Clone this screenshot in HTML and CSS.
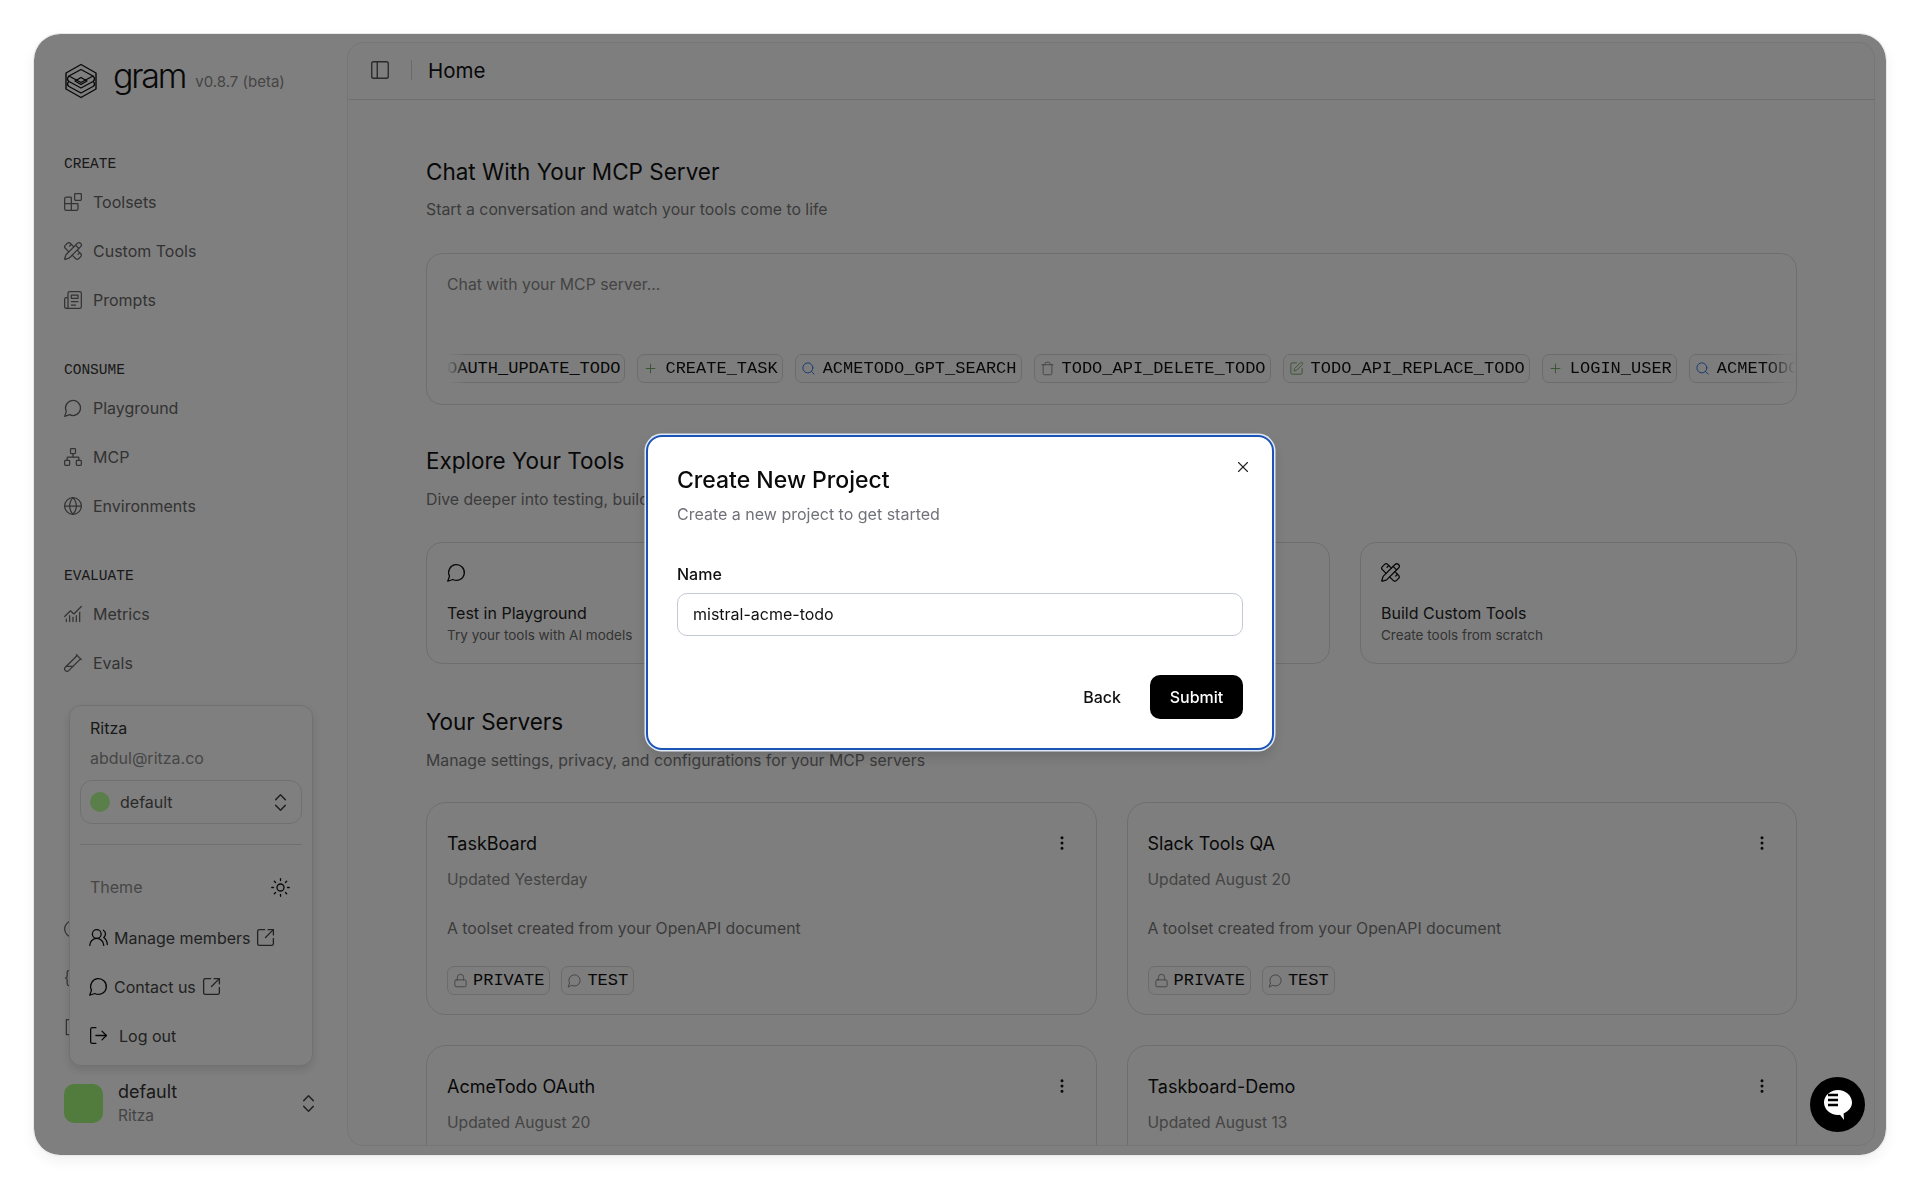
FILE: index.html
```html
<!DOCTYPE html>
<html lang="en">
<head>
    <meta charset="UTF-8">
    <title>Gram - Home</title>
    <link rel="stylesheet" href="styles.css">
</head>
<body>
    <svg class="sprite" xmlns="http://www.w3.org/2000/svg">
        <symbol id="i-blocks" viewBox="0 0 24 24"><path d="M10 22V7a1 1 0 0 0-1-1H4a2 2 0 0 0-2 2v12a2 2 0 0 0 2 2h12a2 2 0 0 0 2-2v-5a1 1 0 0 0-1-1H2"/><rect x="14" y="2" width="8" height="8" rx="1"/></symbol>
        <symbol id="i-ruler" viewBox="0 0 24 24"><path d="M13 7 8.7 2.7a2.41 2.41 0 0 0-3.4 0L2.7 5.3a2.41 2.41 0 0 0 0 3.4L7 13"/><path d="m8 6 2-2"/><path d="m18 16 2-2"/><path d="m17 11 4.3 4.3c.94.94.94 2.46 0 3.4l-2.6 2.6c-.94.94-2.46.94-3.4 0L11 17"/><path d="M21.174 6.812a1 1 0 0 0-3.986-3.987L3.842 16.174a2 2 0 0 0-.5.83l-1.321 4.352a.5.5 0 0 0 .623.622l4.353-1.32a2 2 0 0 0 .83-.497z"/><path d="m15 5 4 4"/></symbol>
        <symbol id="i-news" viewBox="0 0 24 24"><path d="M4 22h16a2 2 0 0 0 2-2V4a2 2 0 0 0-2-2H8a2 2 0 0 0-2 2v16a2 2 0 0 1-2 2Zm0 0a2 2 0 0 1-2-2v-9c0-1.1.9-2 2-2h2"/><path d="M18 14h-8"/><path d="M15 18h-5"/><path d="M10 6h8v4h-8V6Z"/></symbol>
        <symbol id="i-chat" viewBox="0 0 24 24"><path d="M7.9 20A9 9 0 1 0 4 16.1L2 22Z"/></symbol>
        <symbol id="i-network" viewBox="0 0 24 24"><rect x="16" y="16" width="6" height="6" rx="1"/><rect x="2" y="16" width="6" height="6" rx="1"/><rect x="9" y="2" width="6" height="6" rx="1"/><path d="M5 16v-3a1 1 0 0 1 1-1h12a1 1 0 0 1 1 1v3"/><path d="M12 12V8"/></symbol>
        <symbol id="i-globe" viewBox="0 0 24 24"><circle cx="12" cy="12" r="10"/><path d="M12 2a14.5 14.5 0 0 0 0 20 14.5 14.5 0 0 0 0-20"/><path d="M2 12h20"/></symbol>
        <symbol id="i-chart" viewBox="0 0 24 24"><path d="M12 16v5"/><path d="M16 14v7"/><path d="M20 10v11"/><path d="m22 3-8.646 8.646a.5.5 0 0 1-.708 0L9.354 8.354a.5.5 0 0 0-.707 0L2 15"/><path d="M4 18v3"/><path d="M8 14v7"/></symbol>
        <symbol id="i-tube" viewBox="0 0 24 24"><path d="M21 7 6.82 21.18a2.83 2.83 0 0 1-3.99-.01a2.83 2.83 0 0 1 0-4L17 3"/><path d="m16 2 6 6"/><path d="M12 16H4"/></symbol>
        <symbol id="i-sun" viewBox="0 0 24 24"><circle cx="12" cy="12" r="4"/><path d="M12 2v2"/><path d="M12 20v2"/><path d="m4.93 4.93 1.41 1.41"/><path d="m17.66 17.66 1.41 1.41"/><path d="M2 12h2"/><path d="M20 12h2"/><path d="m6.34 17.66-1.41 1.41"/><path d="m19.07 4.93-1.41 1.41"/></symbol>
        <symbol id="i-users" viewBox="0 0 24 24"><path d="M18 21a8 8 0 0 0-16 0"/><circle cx="10" cy="8" r="5"/><path d="M22 20c0-3.37-2-6.5-4-8a5 5 0 0 0-.45-8.3"/></symbol>
        <symbol id="i-ext" viewBox="0 0 24 24"><path d="M21 13v6a2 2 0 0 1-2 2H5a2 2 0 0 1-2-2V5a2 2 0 0 1 2-2h6"/><path d="m21 3-9 9"/><path d="M15 3h6v6"/></symbol>
        <symbol id="i-logout" viewBox="0 0 24 24"><path d="M9 21H5a2 2 0 0 1-2-2V5a2 2 0 0 1 2-2h4"/><path d="m16 17 5-5-5-5"/><path d="M21 12H9"/></symbol>
        <symbol id="i-updown" viewBox="0 0 24 24"><path d="m7 15 5 5 5-5"/><path d="m7 9 5-5 5 5"/></symbol>
        <symbol id="i-panel" viewBox="0 0 24 24"><rect x="3" y="3" width="18" height="18" rx="2"/><path d="M9 3v18"/></symbol>
        <symbol id="i-search" viewBox="0 0 24 24"><path d="m21 21-4.34-4.34"/><circle cx="11" cy="11" r="8"/></symbol>
        <symbol id="i-plus" viewBox="0 0 24 24"><path d="M5 12h14"/><path d="M12 5v14"/></symbol>
        <symbol id="i-trash" viewBox="0 0 24 24"><path d="M19 6v14a2 2 0 0 1-2 2H7a2 2 0 0 1-2-2V6"/><path d="M3 6h18"/><path d="M8 6V4a2 2 0 0 1 2-2h4a2 2 0 0 1 2 2v2"/></symbol>
        <symbol id="i-pen" viewBox="0 0 24 24"><path d="M12 3H5a2 2 0 0 0-2 2v14a2 2 0 0 0 2 2h14a2 2 0 0 0 2-2v-7"/><path d="M18.375 2.625a1 1 0 0 1 3 3l-9.013 9.014a2 2 0 0 1-.853.505l-2.873.84a.5.5 0 0 1-.62-.62l.84-2.873a2 2 0 0 1 .506-.852z"/></symbol>
        <symbol id="i-lock" viewBox="0 0 24 24"><rect x="3" y="11" width="18" height="11" rx="2"/><path d="M7 11V7a5 5 0 0 1 10 0v4"/></symbol>
        <symbol id="i-x" viewBox="0 0 24 24"><path d="M18 6 6 18"/><path d="m6 6 12 12"/></symbol>
        <symbol id="i-dots" viewBox="0 0 24 24"><circle cx="12" cy="5" r="1"/><circle cx="12" cy="12" r="1"/><circle cx="12" cy="19" r="1"/></symbol>
        <symbol id="i-code" viewBox="0 0 24 24"><path d="M8 3H7a2 2 0 0 0-2 2v5a2 2 0 0 1-2 2 2 2 0 0 1 2 2v5a2 2 0 0 0 2 2h1"/></symbol>
        <symbol id="i-bracket" viewBox="0 0 24 24"><path d="M8 3H4v18h4"/></symbol>
        <symbol id="i-clock" viewBox="0 0 24 24"><circle cx="12" cy="12" r="10"/><path d="M12 6v6l4 2"/></symbol>
    </svg>

    <div class="window">
        <aside class="sidebar">
            <div class="brand">
                <svg class="brand-logo" viewBox="0 0 36 36">
                    <path d="M18 1.500 33 10v16L18 34.500 3 26V10Z"/>
                    <path d="M18 6.500 30 13 18 19.500 6 13Z"/>
                    <path d="M12 18 18 14.500 24 18 18 21.500Z"/>
                    <path d="M30 13C32 15 32 17 30 18.500L18 25 6 18.500C4 17 4 15 6 13"/>
                    <path d="M30 18.500C32 20 32 22 30 23.500L18 30 6 23.500C4 22 4 20 6 18.500"/>
                </svg>
                <span class="brand-name">gram</span>
                <span class="brand-version">v0.8.7 (beta)</span>
            </div>

            <div class="nav-group">
                <div class="nav-label">CREATE</div>
                <a class="nav-item"><svg class="ico"><use href="#i-blocks"/></svg>Toolsets</a>
                <a class="nav-item"><svg class="ico"><use href="#i-ruler"/></svg>Custom Tools</a>
                <a class="nav-item"><svg class="ico"><use href="#i-news"/></svg>Prompts</a>
            </div>
            <div class="nav-group">
                <div class="nav-label">CONSUME</div>
                <a class="nav-item"><svg class="ico"><use href="#i-chat"/></svg>Playground</a>
                <a class="nav-item"><svg class="ico"><use href="#i-network"/></svg>MCP</a>
                <a class="nav-item"><svg class="ico"><use href="#i-globe"/></svg>Environments</a>
            </div>
            <div class="nav-group">
                <div class="nav-label">EVALUATE</div>
                <a class="nav-item"><svg class="ico"><use href="#i-chart"/></svg>Metrics</a>
                <a class="nav-item"><svg class="ico"><use href="#i-tube"/></svg>Evals</a>
            </div>
            <div class="nav-group nav-hidden">
                <a class="nav-item"><svg class="ico"><use href="#i-clock"/></svg></a>
                <a class="nav-item"><svg class="ico"><use href="#i-code"/></svg></a>
                <a class="nav-item"><svg class="ico"><use href="#i-bracket"/></svg></a>
            </div>

            <div class="project">
                <div class="project-swatch"></div>
                <div class="project-text">
                    <div class="project-name">default</div>
                    <div class="project-org">Ritza</div>
                </div>
                <svg class="ico project-arrows"><use href="#i-updown"/></svg>
            </div>

            <div class="user-menu">
                <div class="user-name">Ritza</div>
                <div class="user-mail">abdul@ritza.co</div>
                <div class="org-select">
                    <span class="org-dot"></span>
                    <span class="org-name">default</span>
                    <svg class="ico org-arrows"><use href="#i-updown"/></svg>
                </div>
                <div class="menu-line"></div>
                <div class="menu-theme">
                    <span>Theme</span>
                    <svg class="ico"><use href="#i-sun"/></svg>
                </div>
                <a class="menu-item"><svg class="ico"><use href="#i-users"/></svg>Manage members<svg class="ico ico-ext"><use href="#i-ext"/></svg></a>
                <a class="menu-item"><svg class="ico"><use href="#i-chat"/></svg>Contact us<svg class="ico ico-ext"><use href="#i-ext"/></svg></a>
                <a class="menu-item menu-logout"><svg class="ico"><use href="#i-logout"/></svg>Log out</a>
            </div>
        </aside>

        <main class="panel">
            <header class="topbar">
                <svg class="ico"><use href="#i-panel"/></svg>
                <span class="topbar-line"></span>
                <span class="topbar-title">Home</span>
            </header>

            <div class="content">
                <section class="block block-chat">
                    <h2>Chat With Your MCP Server</h2>
                    <p class="lead">Start a conversation and watch your tools come to life</p>
                    <div class="chat-box">
                        <div class="chat-hint">Chat with your MCP server...</div>
                        <div class="chat-strip">
                            <div class="chat-track">
                                <span class="chip"><svg class="ico ico-blue"><use href="#i-pen"/></svg>OAUTH_UPDATE_TODO</span>
                                <span class="chip"><svg class="ico ico-green"><use href="#i-plus"/></svg>CREATE_TASK</span>
                                <span class="chip"><svg class="ico ico-blue"><use href="#i-search"/></svg>ACMETODO_GPT_SEARCH</span>
                                <span class="chip"><svg class="ico ico-gray"><use href="#i-trash"/></svg>TODO_API_DELETE_TODO</span>
                                <span class="chip"><svg class="ico ico-green"><use href="#i-pen"/></svg>TODO_API_REPLACE_TODO</span>
                                <span class="chip"><svg class="ico ico-green"><use href="#i-plus"/></svg>LOGIN_USER</span>
                                <span class="chip"><svg class="ico ico-blue"><use href="#i-search"/></svg>ACMETODO_GPT_SEARCH</span>
                            </div>
                        </div>
                    </div>
                </section>

                <section class="block block-explore">
                    <h2>Explore Your Tools</h2>
                    <p class="lead">Dive deeper into testing, building, and more</p>
                    <div class="explore-grid">
                        <div class="explore-card">
                            <svg class="ico"><use href="#i-chat"/></svg>
                            <div class="explore-title">Test in Playground</div>
                            <div class="explore-sub">Try your tools with AI models</div>
                        </div>
                        <div class="explore-card"></div>
                        <div class="explore-card">
                            <svg class="ico"><use href="#i-ruler"/></svg>
                            <div class="explore-title">Build Custom Tools</div>
                            <div class="explore-sub">Create tools from scratch</div>
                        </div>
                    </div>
                </section>

                <section class="block">
                    <h2>Your Servers</h2>
                    <p class="lead">Manage settings, privacy, and configurations for your MCP servers</p>
                    <div class="server-grid">
                        <div class="server-card">
                            <div class="server-head"><span class="server-name">TaskBoard</span><svg class="ico ico-dots"><use href="#i-dots"/></svg></div>
                            <div class="server-date">Updated Yesterday</div>
                            <div class="server-desc">A toolset created from your OpenAPI document</div>
                            <div class="server-tags">
                                <span class="chip"><svg class="ico ico-gray"><use href="#i-lock"/></svg>PRIVATE</span>
                                <span class="chip"><svg class="ico ico-gray"><use href="#i-chat"/></svg>TEST</span>
                            </div>
                        </div>
                        <div class="server-card">
                            <div class="server-head"><span class="server-name">Slack Tools QA</span><svg class="ico ico-dots"><use href="#i-dots"/></svg></div>
                            <div class="server-date">Updated August 20</div>
                            <div class="server-desc">A toolset created from your OpenAPI document</div>
                            <div class="server-tags">
                                <span class="chip"><svg class="ico ico-gray"><use href="#i-lock"/></svg>PRIVATE</span>
                                <span class="chip"><svg class="ico ico-gray"><use href="#i-chat"/></svg>TEST</span>
                            </div>
                        </div>
                        <div class="server-card">
                            <div class="server-head"><span class="server-name">AcmeTodo OAuth</span><svg class="ico ico-dots"><use href="#i-dots"/></svg></div>
                            <div class="server-date">Updated August 20</div>
                        </div>
                        <div class="server-card">
                            <div class="server-head"><span class="server-name">Taskboard-Demo</span><svg class="ico ico-dots"><use href="#i-dots"/></svg></div>
                            <div class="server-date">Updated August 13</div>
                        </div>
                    </div>
                </section>
            </div>
        </main>

        <div class="dim"></div>

        <button class="help-btn">
            <svg viewBox="0 0 28 33">
                <path class="help-bubble" d="M14 2C6.300 2 0 7.600 0 14.500S6.300 27 14 27c.7 0 1.400 0 2-.2L20 32l-.4-6.500C24.500 23.300 28 19.300 28 14.500 28 7.600 21.700 2 14 2Z"/>
                <path class="help-lines" d="M4 7h10M4 12h10M4 17h10"/>
            </svg>
        </button>

        <div class="modal">
            <svg class="ico modal-close"><use href="#i-x"/></svg>
            <h3>Create New Project</h3>
            <p class="modal-sub">Create a new project to get started</p>
            <label class="modal-label">Name</label>
            <div class="modal-input">mistral-acme-todo</div>
            <div class="modal-actions">
                <button class="btn-back">Back</button>
                <button class="btn-submit">Submit</button>
            </div>
        </div>
    </div>
</body>
</html>
```

FILE: styles.css
```css
* {
    box-sizing: border-box;
}

body {
    margin: 0;
    padding: 34px;
    height: 1191px;
    overflow: hidden;
    background: #fff;
    font-family: "Inter", "Liberation Sans", sans-serif;
    color: #1c1c1c;
}

.sprite {
    display: none;
}

.ico {
    width: 18px;
    height: 18px;
    flex: none;
    fill: none;
    stroke: currentColor;
    stroke-width: 1.5;
    stroke-linecap: round;
    stroke-linejoin: round;
}

/* window */
.window {
    position: relative;
    display: flex;
    width: 1852px;
    height: 1121px;
    border-radius: 26px;
    background: #fff;
    overflow: hidden;
    padding: 8px 11px 9px 0;
}

body::after {
    content: "";
    position: absolute;
    left: 34px;
    top: 34px;
    width: 1852px;
    height: 1121px;
    border-radius: 26px;
    box-shadow: 0 0 0 1px #e8e8e8, 0 6px 14px rgba(0, 0, 0, .06);
    pointer-events: none;
}

.dim {
    position: absolute;
    inset: 0;
    background: rgba(0, 0, 0, .5);
}

/* sidebar */
.sidebar {
    position: relative;
    display: flex;
    flex-direction: column;
    width: 313px;
    flex: none;
    padding: 21px 0 0 30px;
}

.brand {
    display: flex;
    align-items: center;
    height: 36px;
    margin: 0 0 56px -1px;
}

.brand-logo {
    width: 36px;
    height: 36px;
    flex: none;
    fill: none;
    stroke: #111;
    stroke-width: 1.4;
    stroke-linejoin: round;
}

.brand-name {
    margin-left: 14px;
    font-size: 34px;
    font-weight: 300;
    letter-spacing: -2.2px;
    line-height: 36px;
    color: #111;
    position: relative;
    top: -5px;
}

.brand-version {
    margin-left: 10px;
    font-size: 15px;
    color: #8a8a8a;
}

.nav-group {
    margin-bottom: 36.500px;
}

.nav-label {
    height: 18px;
    line-height: 18px;
    font-family: "Liberation Mono", monospace;
    font-size: 14.500px;
    color: #333;
}

.nav-item {
    display: flex;
    align-items: center;
    gap: 10px;
    height: 49px;
    font-size: 16px;
    color: #666;
}

.nav-group .nav-label + .nav-item {
    margin-top: 4.500px;
}

.nav-hidden {
    margin-top: 180px;
}

.nav-item .ico {
    width: 20px;
    height: 20px;
    margin-left: -1px;
}

.project {
    position: absolute;
    left: 30px;
    right: 0;
    top: 1036px;
    display: flex;
    align-items: center;
}

.project-swatch {
    width: 39px;
    height: 39px;
    border-radius: 10px;
    background: #a4f87c;
}

.project-text {
    margin-left: 15px;
    padding-top: 2px;
    flex: 1;
}

.project-name {
    font-size: 18px;
    line-height: 24px;
    color: #333;
}

.project-org {
    font-size: 15.500px;
    line-height: 24px;
    color: #888;
}

.project-arrows {
    width: 23px;
    height: 23px;
    margin-right: 27px;
    color: #444;
}

/* popup above the project switcher */
.user-menu {
    position: absolute;
    left: 35px;
    top: 663px;
    width: 244px;
    height: 361px;
    padding: 10px 10px 0;
    background: #fff;
    border: 1px solid #e3e3e3;
    border-radius: 12px;
    box-shadow: 0 4px 10px rgba(0, 0, 0, .12);
}

.user-name {
    padding-left: 10px;
    font-size: 16px;
    line-height: 24px;
    color: #333;
}

.user-mail {
    padding-left: 10px;
    margin-top: 6px;
    font-size: 16px;
    line-height: 24px;
    color: #8c8c8c;
}

.org-select {
    display: flex;
    align-items: center;
    height: 44px;
    margin-top: 10px;
    padding: 0 9px 0 9px;
    border: 1px solid #e0e0e0;
    border-radius: 12px;
}

.org-dot {
    width: 20px;
    height: 20px;
    border-radius: 50%;
    background: #b4ff96;
}

.org-name {
    flex: 1;
    margin-left: 10px;
    font-size: 16px;
    color: #555;
}

.org-arrows {
    width: 23px;
    height: 23px;
    color: #444;
}

.menu-line {
    height: 1px;
    margin-top: 20px;
    background: #dedede;
}

.menu-theme {
    display: flex;
    align-items: center;
    justify-content: space-between;
    height: 24px;
    margin: 30px 0 0;
    padding: 0 11px 0 10px;
    font-size: 16px;
    color: #8c8c8c;
}

.menu-theme .ico {
    width: 21px;
    height: 21px;
    color: #111;
}

.menu-item {
    display: flex;
    align-items: center;
    gap: 5px;
    height: 49px;
    padding-left: 8px;
    font-size: 16px;
    color: #444;
}

.menu-theme + .menu-item {
    margin-top: 14px;
}

.menu-item .ico {
    width: 21px;
    height: 21px;
    color: #111;
}

.menu-item .ico-ext {
    color: #444;
}

.menu-logout {
    gap: 10px;
}

/* main panel */
.panel {
    flex: 1;
    min-width: 0;
    position: relative;
    display: flex;
    flex-direction: column;
    border: 1px solid #ececec;
    border-radius: 16px;
    background: #fdfdfd;
    overflow: hidden;
}

.topbar {
    display: flex;
    align-items: center;
    height: 57px;
    flex: none;
    padding: 0 0 2px 21px;
    border-bottom: 1px solid #dedede;
    color: #555;
}

.topbar .ico {
    width: 22px;
    height: 22px;
}

.topbar-line {
    width: 1px;
    height: 20px;
    margin: 0 16px 0 20px;
    background: #d4d4d4;
}

.topbar-title {
    font-size: 20.500px;
    color: #111;
}

.content {
    padding: 57px 77px 0 78px;
}

.block h2 {
    margin: 0;
    font-size: 22.500px;
    font-weight: 400;
    line-height: 30px;
    color: #111;
}

.lead {
    margin: 11px 0 0;
    font-size: 15.800px;
    line-height: 26px;
    color: #777;
}

.block-chat {
    margin-bottom: 41px;
}

.block-chat .lead {
    margin-top: 10px;
}

.chat-box {
    height: 152px;
    margin-top: 30px;
    padding: 19px 20px 0;
    border: 1px solid #dcdcdc;
    border-radius: 16px;
}

.chat-hint {
    height: 24px;
    line-height: 24px;
    font-size: 15.800px;
    color: #888;
}

.chat-strip {
    margin: 57px -20px 0 0;
    overflow: hidden;
    -webkit-mask-image: linear-gradient(90deg, transparent 0, #000 20px, #000 calc(100% - 30px), transparent 100%);
    mask-image: linear-gradient(90deg, transparent 0, #000 20px, #000 calc(100% - 30px), transparent 100%);
}

.chat-track {
    display: flex;
    gap: 12px;
    width: max-content;
    margin-left: -28px;
}

.chat-track .chip {
    gap: 7px;
}

.chip {
    display: inline-flex;
    align-items: center;
    gap: 5px;
    height: 29px;
    padding: 0 4px 0 5px;
    border: 1px solid #d8d8d8;
    border-radius: 7px;
    background: #fafafa;
    font-family: "Liberation Mono", monospace;
    font-size: 17px;
    color: #111;
    white-space: nowrap;
}

.chip .ico {
    width: 15px;
    height: 15px;
}

.ico-blue {
    color: #2b6fe0;
}

.ico-green {
    color: #6ea85c;
}

.ico-gray {
    color: #888;
}

.block-explore {
    margin-bottom: 43px;
}

.explore-grid {
    display: grid;
    grid-template-columns: repeat(3, 1fr);
    gap: 30px;
    margin-top: 29px;
}

.explore-card {
    height: 122px;
    padding: 19px 20px 0;
    border: 1px solid #dcdcdc;
    border-radius: 16px;
}

.explore-card .ico {
    display: block;
    width: 21px;
    height: 21px;
    margin-left: -1px;
    color: #111;
}

.explore-title {
    margin-top: 19px;
    font-size: 16px;
    line-height: 22px;
    color: #222;
}

.explore-sub {
    font-size: 13.500px;
    line-height: 22px;
    color: #666;
}

.server-grid {
    display: grid;
    grid-template-columns: repeat(2, 1fr);
    gap: 30px;
    margin-top: 28px;
}

.server-card {
    height: 213px;
    padding: 27px 20px 0;
    border: 1px solid #dcdcdc;
    border-radius: 20px;
}

.server-head {
    display: flex;
    align-items: center;
    justify-content: space-between;
    height: 26px;
}

.server-name {
    font-size: 18px;
    color: #111;
}

.ico-dots {
    margin-right: 5px;
    color: #111;
    stroke-width: 2;
}

.server-date {
    margin-top: 11px;
    font-size: 15.600px;
    line-height: 26px;
    color: #888;
}

.server-desc {
    margin-top: 23px;
    font-size: 15.800px;
    line-height: 26px;
    color: #777;
}

.server-tags {
    display: flex;
    gap: 11px;
    margin-top: 24px;
}

.server-tags .chip {
    padding-right: 5px;
}

/* floating help */
.help-btn {
    position: absolute;
    left: 1776px;
    top: 1043px;
    width: 55px;
    height: 55px;
    padding: 0;
    display: flex;
    align-items: center;
    justify-content: center;
    border: 0;
    border-radius: 50%;
    background: #000;
}

.help-btn svg {
    width: 28px;
    height: 33px;
}

.help-bubble {
    fill: #fff;
}

.help-lines {
    fill: none;
    stroke: #000;
    stroke-width: 2.500;
}

/* modal */
.modal {
    position: absolute;
    left: 612px;
    top: 401px;
    width: 628px;
    height: 315px;
    padding: 27px 29px 0;
    background: #fff;
    border: 2.500px solid #1a55b5;
    border-radius: 16px;
    box-shadow: 0 0 0 1.500px #dfe8f6, 0 6px 14px rgba(0, 0, 0, .15);
}

.modal-close {
    position: absolute;
    right: 20px;
    top: 21px;
    color: #222;
}

.modal h3 {
    margin: 0;
    font-size: 23px;
    font-weight: 500;
    line-height: 32px;
    color: #0a0a0a;
}

.modal-sub {
    margin: 6px 0 0;
    font-size: 16px;
    line-height: 24px;
    color: #71717a;
}

.modal-label {
    display: block;
    margin-top: 36px;
    font-size: 16px;
    font-weight: 500;
    line-height: 24px;
    color: #111;
}

.modal-input {
    height: 43px;
    margin-top: 7px;
    padding: 0 15px;
    line-height: 41px;
    border: 1px solid #c4c9d6;
    border-radius: 10px;
    font-size: 16px;
    color: #111;
}

.modal-actions {
    display: flex;
    justify-content: flex-end;
    align-items: center;
    gap: 20px;
    margin-top: 39px;
}

.modal-actions button {
    font-family: inherit;
    font-size: 16px;
    font-weight: 500;
    border: 0;
}

.btn-back {
    padding: 0 9px;
    background: none;
    color: #111;
}

.btn-submit {
    width: 93px;
    height: 44px;
    border-radius: 10px;
    background: #000;
    color: #fff;
}
```
